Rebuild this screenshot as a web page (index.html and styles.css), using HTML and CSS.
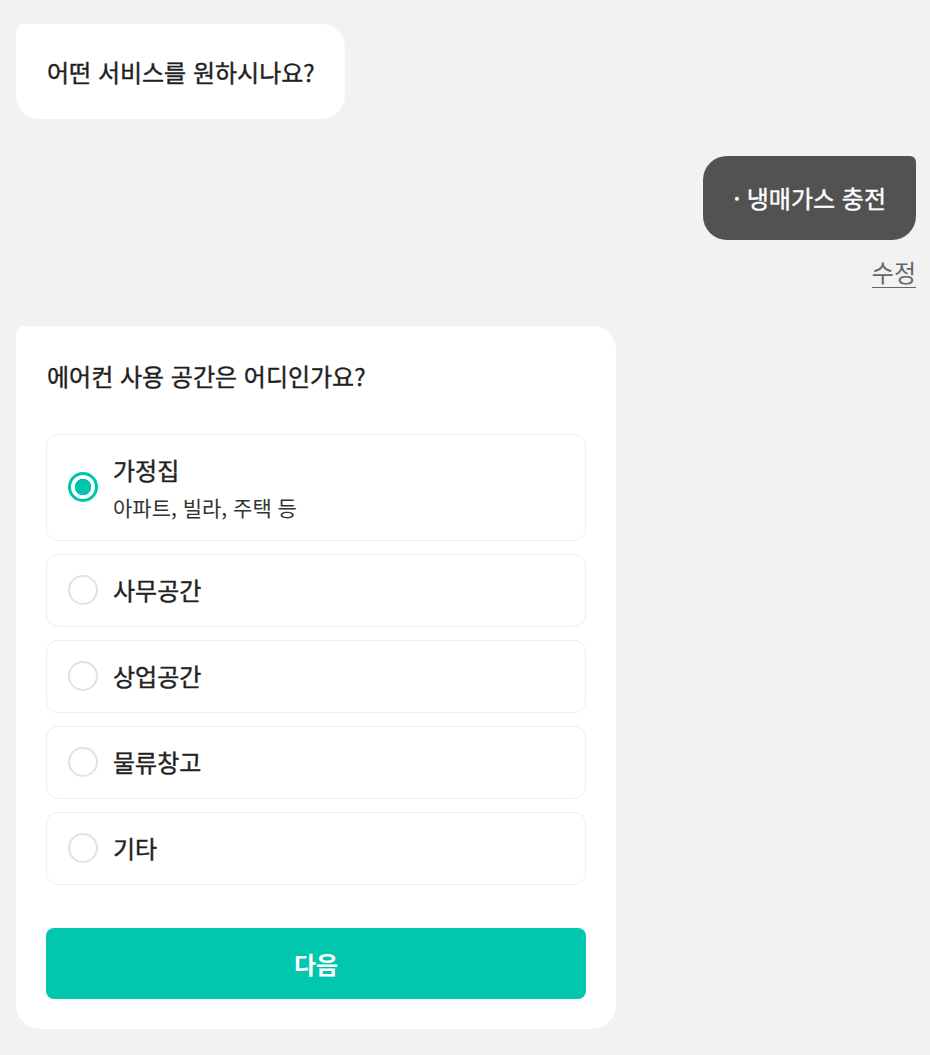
FILE: index.html
```html
<!DOCTYPE html>
<html lang="ko">
<head>
<meta charset="utf-8">
<link rel="stylesheet" href="styles.css">
</head>
<body>
<div class="chat">
  <div class="bubble bot">어떤 서비스를 원하시나요?</div>
  <div class="user-row">
    <div class="bubble user">· 냉매가스 충전</div>
    <a class="edit" href="#">수정</a>
  </div>
  <div class="card">
    <div class="question">에어컨 사용 공간은 어디인가요?</div>
    <div class="options">
      <label class="option selected">
        <span class="radio"></span>
        <span class="texts">
          <span class="label">가정집</span>
          <span class="sub">아파트, 빌라, 주택 등</span>
        </span>
      </label>
      <label class="option"><span class="radio"></span><span class="label">사무공간</span></label>
      <label class="option"><span class="radio"></span><span class="label">상업공간</span></label>
      <label class="option"><span class="radio"></span><span class="label">물류창고</span></label>
      <label class="option"><span class="radio"></span><span class="label">기타</span></label>
    </div>
    <button class="next">다음</button>
  </div>
</div>
</body>
</html>
```

FILE: styles.css
```css
* { box-sizing: border-box; }
html, body {
  margin: 0;
  background: #f2f2f2;
}
body {
  font-family: "Noto Sans CJK KR", "Noto Sans", sans-serif;
  color: #222;
  padding: 24px 14px 0 16px;
}
.chat {
  display: flex;
  flex-direction: column;
  align-items: flex-start;
}
.bubble,
.question,
.label {
  font-weight: 400;
  -webkit-text-stroke: 0.4px currentColor;
}
.bubble {
  font-size: 24px;
  line-height: 34px;
}
.bot {
  background: #fff;
  padding: 31px 30px 30px 31px;
  border-radius: 8px 24px 24px 24px;
  color: #1f1f1f;
}
.user-row {
  align-self: stretch;
  display: flex;
  flex-direction: column;
  align-items: flex-end;
  margin-top: 37px;
}
.user {
  background: #525252;
  color: #fff;
  padding: 25px 30px 25px 30px;
  border-radius: 24px 6px 24px 24px;
}
.edit {
  margin-top: 15px;
  font-size: 24px;
  line-height: 34px;
  color: #666;
  text-decoration: underline;
  text-underline-offset: 5px;
  text-decoration-thickness: 1px;
}
.card {
  margin-top: 37px;
  width: 600px;
  background: #fff;
  border-radius: 8px 24px 24px 24px;
  padding: 33px 30px 30px 30px;
}
.question {
  font-size: 24px;
  line-height: 34px;
  color: #1f1f1f;
  padding-left: 1px;
}
.options {
  margin-top: 41px;
  display: flex;
  flex-direction: column;
  gap: 13px;
}
.option {
  display: flex;
  align-items: center;
  gap: 15px;
  border: 1px solid #eeeeee;
  border-radius: 12px;
  padding: 18px 20px 19px 21px;
  height: 73px;
}
.option.selected {
  height: 107px;
}
.radio {
  flex: none;
  width: 30px;
  height: 30px;
  border-radius: 50%;
  border: 2px solid #e2e2e2;
  background: #fff;
}
.selected .radio {
  border: 3px solid #00c4ac;
  background: radial-gradient(circle, #00c4ac 0 8px, #fff 8.5px);
}
.texts {
  display: flex;
  flex-direction: column;
  gap: 6px;
}
.label {
  font-size: 24px;
  line-height: 34px;
  color: #222;
}
.sub {
  font-size: 21px;
  line-height: 28px;
  color: #333;
}
.next {
  display: block;
  margin-top: 43px;
  width: 540px;
  height: 71px;
  border: 0;
  border-radius: 8px;
  background: #00c7ae;
  color: #fff;
  font-family: inherit;
  font-size: 24px;
  font-weight: 700;
}
```
